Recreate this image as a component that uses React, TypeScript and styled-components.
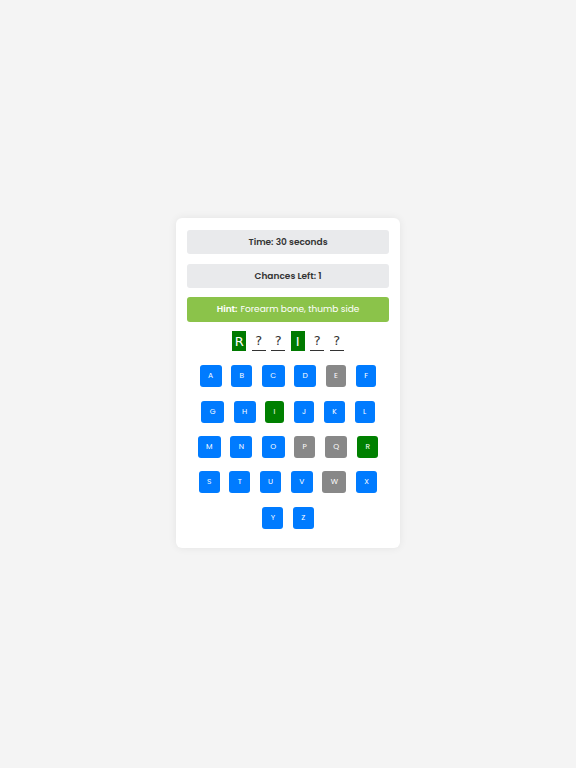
import React from 'react'
import styled, { createGlobalStyle } from 'styled-components'

const GlobalStyle = createGlobalStyle`
  html, body {
    margin: 0;
    padding: 0;
    background: #f4f4f4;
  }
  body {
    font-family: 'Poppins', 'Inter', 'Liberation Sans', sans-serif;
  }
`

const WORD = ['R', '?', '?', 'I', '?', '?']
const REVEALED = [true, false, false, true, false, false]
const WRONG = new Set(['E', 'P', 'Q', 'W'])
const RIGHT = new Set(['I', 'R'])
const LETTERS = 'ABCDEFGHIJKLMNOPQRSTUVWXYZ'.split('')

type KeyState = 'idle' | 'wrong' | 'right'

const keyColor = (state: KeyState) =>
  state === 'right' ? '#008000' : state === 'wrong' ? '#888888' : '#007bff'

const App: React.FC = () => {
  return (
    <>
      <GlobalStyle />
      <Page>
        <Card>
          <InfoBar>Time: 30 seconds</InfoBar>
          <InfoBar>Chances Left: 1</InfoBar>
          <HintBar>
            <strong>Hint:</strong> Forearm bone, thumb side
          </HintBar>
          <WordRow>
            {WORD.map((ch, i) => (
              <Slot key={i} $revealed={REVEALED[i]}>
                {ch}
              </Slot>
            ))}
          </WordRow>
          <Keyboard>
            {LETTERS.map(letter => {
              const state: KeyState = RIGHT.has(letter)
                ? 'right'
                : WRONG.has(letter)
                ? 'wrong'
                : 'idle'
              return (
                <Key key={letter} $state={state}>
                  {letter}
                </Key>
              )
            })}
          </Keyboard>
        </Card>
      </Page>
    </>
  )
}

const Page = styled.div`
  min-height: 768px;
  display: flex;
  align-items: center;
  justify-content: center;
`

const Card = styled.div`
  width: 202px;
  padding: 12px 11px 19px;
  background: #ffffff;
  border-radius: 6px;
  box-shadow: 0 0 8px rgba(0, 0, 0, 0.07);
  display: flex;
  flex-direction: column;
  transform: translateY(-1px);
`

const InfoBar = styled.div`
  height: 24px;
  margin-bottom: 10px;
  background: #e9eaec;
  border-radius: 3px;
  color: #333333;
  font-size: 9px;
  font-weight: 600;
  display: flex;
  align-items: center;
  justify-content: center;

  & + & {
    margin-bottom: 9px;
  }
`

const HintBar = styled.div`
  height: 25px;
  background: #8bc34a;
  border-radius: 3px;
  color: #ffffff;
  font-size: 9px;
  display: flex;
  align-items: center;
  justify-content: center;
  gap: 3px;

  strong {
    font-weight: 600;
  }
`

const WordRow = styled.div`
  margin-top: 9px;
  display: flex;
  justify-content: center;
  gap: 5.5px;
`

const Slot = styled.span<{ $revealed: boolean }>`
  width: 14px;
  height: 20px;
  display: flex;
  align-items: center;
  justify-content: center;
  font-family: 'DejaVu Sans', 'Liberation Sans', sans-serif;
  font-size: 13px;
  color: ${p => (p.$revealed ? '#ffffff' : '#333333')};
  background: ${p => (p.$revealed ? '#007a00' : 'transparent')};
  border-bottom: ${p => (p.$revealed ? 'none' : '1px solid #333333')};
  box-sizing: border-box;
`

const Keyboard = styled.div`
  margin-top: 14px;
  display: flex;
  flex-wrap: wrap;
  justify-content: center;
  gap: 13.3px 9.5px;
`

const Key = styled.button<{ $state: KeyState }>`
  height: 22px;
  padding: 0 8.4px;
  min-width: 19px;
  border: none;
  border-radius: 3px;
  background: ${p => keyColor(p.$state)};
  color: #ffffff;
  font-family: 'Poppins', 'Liberation Sans', sans-serif;
  font-size: 7.5px;
  cursor: pointer;
`

export default App
